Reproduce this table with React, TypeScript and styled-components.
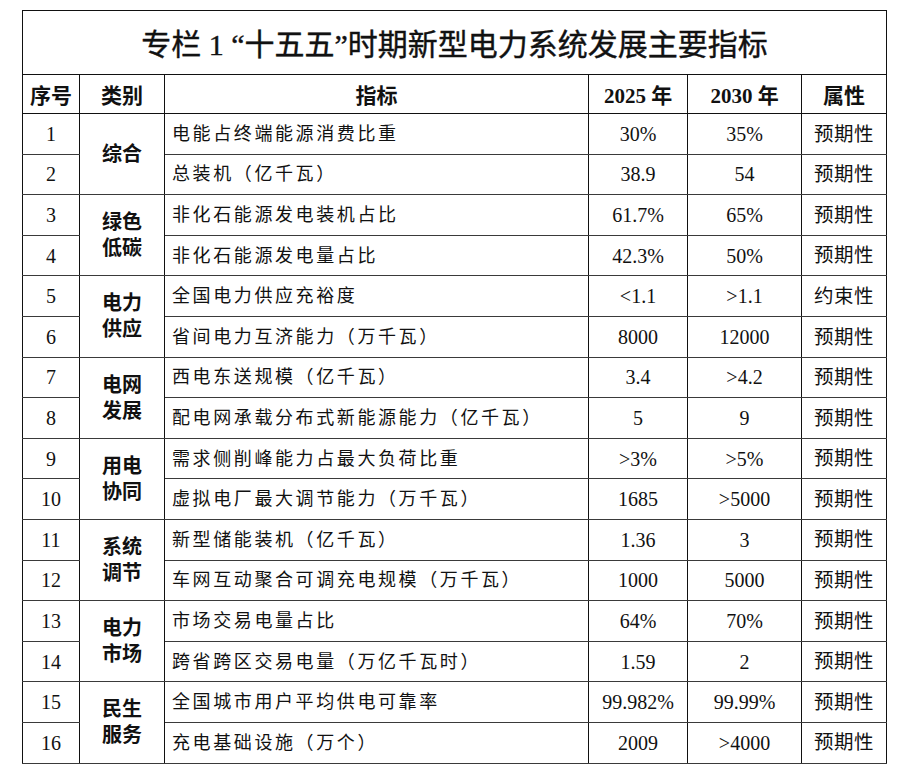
import {ReactNode} from "react";
import styled, {createGlobalStyle} from "styled-components";

const GlobalStyle = createGlobalStyle`
  html, body {
    margin: 0;
    padding: 0;
    background: #fff;
  }
`;

const Page = styled.div`
  padding: 10px 0 0 22px;
  font-family: "Liberation Serif", "Noto Sans CJK SC", serif;
  color: #111;
`;

const Table = styled.table`
  border-collapse: collapse;
  table-layout: fixed;
  width: 864px;
  border: 1px solid #111;
`;

const TitleCell = styled.th`
  height: 61px;
  padding: 0 0 2px;
  font-size: 30px;
  font-weight: normal;
  text-align: center;
  border: 1px solid #111;
  -webkit-text-stroke: 0.4px #111;
`;

const HeadCell = styled.th`
  height: 38px;
  padding: 0;
  font-size: 21px;
  font-weight: bold;
  text-align: center;
  border: 1px solid #111;
`;

const Row = styled.tr`
  height: 40.6px;
`;

const Cell = styled.td<{$left?: boolean}>`
  padding: ${p => p.$left ? "0 0 0 7px" : "0"};
  font-size: ${p => p.$left ? "18px" : "20px"};
  letter-spacing: ${p => p.$left ? "2.6px" : "0"};
  text-align: ${p => p.$left ? "left" : "center"};
  vertical-align: middle;
  border: 1px solid #3a3a3a;
  border-left-color: #111;
  border-right-color: #111;
  white-space: nowrap;
  line-height: 1;
`;

const CategoryCell = styled.td`
  padding: 0;
  font-size: 20px;
  font-weight: bold;
  line-height: 26px;
  text-align: center;
  vertical-align: middle;
  border: 1px solid #3a3a3a;
  border-left-color: #111;
  border-right-color: #111;
`;

const Attr = styled.span`
  font-size: 19.5px;
  letter-spacing: 0.5px;
`;

type Item = {name: string; y2025: string; y2030: string; attr: string};
type Group = {category: string[]; items: Item[]};

const groups: Group[] = [
    {category: ["综合"], items: [
        {name: "电能占终端能源消费比重", y2025: "30%", y2030: "35%", attr: "预期性"},
        {name: "总装机（亿千瓦）", y2025: "38.9", y2030: "54", attr: "预期性"},
    ]},
    {category: ["绿色", "低碳"], items: [
        {name: "非化石能源发电装机占比", y2025: "61.7%", y2030: "65%", attr: "预期性"},
        {name: "非化石能源发电量占比", y2025: "42.3%", y2030: "50%", attr: "预期性"},
    ]},
    {category: ["电力", "供应"], items: [
        {name: "全国电力供应充裕度", y2025: "<1.1", y2030: ">1.1", attr: "约束性"},
        {name: "省间电力互济能力（万千瓦）", y2025: "8000", y2030: "12000", attr: "预期性"},
    ]},
    {category: ["电网", "发展"], items: [
        {name: "西电东送规模（亿千瓦）", y2025: "3.4", y2030: ">4.2", attr: "预期性"},
        {name: "配电网承载分布式新能源能力（亿千瓦）", y2025: "5", y2030: "9", attr: "预期性"},
    ]},
    {category: ["用电", "协同"], items: [
        {name: "需求侧削峰能力占最大负荷比重", y2025: ">3%", y2030: ">5%", attr: "预期性"},
        {name: "虚拟电厂最大调节能力（万千瓦）", y2025: "1685", y2030: ">5000", attr: "预期性"},
    ]},
    {category: ["系统", "调节"], items: [
        {name: "新型储能装机（亿千瓦）", y2025: "1.36", y2030: "3", attr: "预期性"},
        {name: "车网互动聚合可调充电规模（万千瓦）", y2025: "1000", y2030: "5000", attr: "预期性"},
    ]},
    {category: ["电力", "市场"], items: [
        {name: "市场交易电量占比", y2025: "64%", y2030: "70%", attr: "预期性"},
        {name: "跨省跨区交易电量（万亿千瓦时）", y2025: "1.59", y2030: "2", attr: "预期性"},
    ]},
    {category: ["民生", "服务"], items: [
        {name: "全国城市用户平均供电可靠率", y2025: "99.982%", y2030: "99.99%", attr: "预期性"},
        {name: "充电基础设施（万个）", y2025: "2009", y2030: ">4000", attr: "预期性"},
    ]},
];

export default function App(): ReactNode {
    let index = 0;

    return (
        <>
            <GlobalStyle />
            <Page>
                <Table>
                    <colgroup>
                        <col style={{width: "57px"}} />
                        <col style={{width: "85px"}} />
                        <col style={{width: "424px"}} />
                        <col style={{width: "99px"}} />
                        <col style={{width: "114px"}} />
                        <col style={{width: "85px"}} />
                    </colgroup>
                    <thead>
                        <tr>
                            <TitleCell colSpan={6}>专栏 1 “十五五”时期新型电力系统发展主要指标</TitleCell>
                        </tr>
                        <tr>
                            <HeadCell>序号</HeadCell>
                            <HeadCell>类别</HeadCell>
                            <HeadCell>指标</HeadCell>
                            <HeadCell>2025 年</HeadCell>
                            <HeadCell>2030 年</HeadCell>
                            <HeadCell>属性</HeadCell>
                        </tr>
                    </thead>
                    <tbody>
                        {groups.map(group => group.items.map((item, i) => {
                            index += 1;
                            return (
                                <Row key={index}>
                                    <Cell>{index}</Cell>
                                    {i === 0 && (
                                        <CategoryCell rowSpan={group.items.length}>
                                            {group.category.map(line => <div key={line}>{line}</div>)}
                                        </CategoryCell>
                                    )}
                                    <Cell $left>{item.name}</Cell>
                                    <Cell>{item.y2025}</Cell>
                                    <Cell>{item.y2030}</Cell>
                                    <Cell><Attr>{item.attr}</Attr></Cell>
                                </Row>
                            );
                        }))}
                    </tbody>
                </Table>
            </Page>
        </>
    );
}
